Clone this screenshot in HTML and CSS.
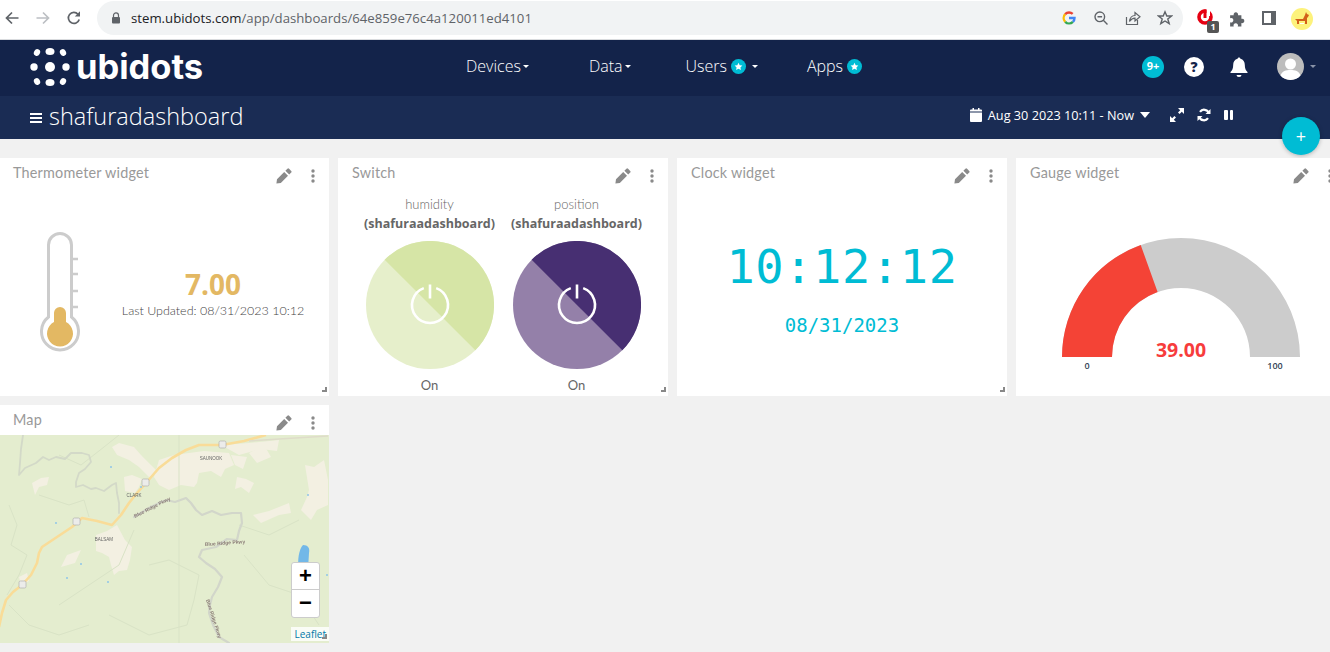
FILE: index.html
```html
<!DOCTYPE html>
<html lang="en">
<head>
    <meta charset="UTF-8">
    <meta name="viewport" content="width=device-width, initial-scale=1.0">
    <title>shafuradashboard | Ubidots</title>
    <link rel="stylesheet" href="styles.css">
</head>
<body>
    <svg class="sprites" width="0" height="0">
        <symbol id="pencil" viewBox="0 0 16 16">
            <path d="M1 11.2 L0.4 15.6 L4.8 15 L12 7.8 L8.2 4 Z M9.4 2.8 L13.2 6.6 L15.2 4.6 a1.2 1.2 0 0 0 0-1.7 L13.1 0.8 a1.2 1.2 0 0 0-1.7 0 Z"/>
        </symbol>
        <symbol id="kebab" viewBox="0 0 4 14">
            <circle cx="2" cy="2" r="1.7"/><circle cx="2" cy="7" r="1.7"/><circle cx="2" cy="12" r="1.7"/>
        </symbol>
        <symbol id="star" viewBox="0 0 10 10">
            <path d="M5 .8 6.3 3.6 9.3 4 7.1 6 7.7 9 5 7.5 2.3 9 2.9 6 .7 4 3.7 3.6Z" fill="#fff"/>
        </symbol>
        <symbol id="power" viewBox="0 0 128 128">
            <path d="M57.8 47.1 A18 18 0 1 0 70.2 47.1" fill="none" stroke="#fff" stroke-width="2.6"/>
            <path d="M64 43.5 V57.5" stroke="#fff" stroke-width="2.6"/>
        </symbol>
    </svg>

    <!-- browser toolbar -->
    <div class="browser-bar">
        <svg class="nav-arrow" viewBox="0 0 16 16"><path d="M14.5 8H2.5M8 2.5 2.5 8 8 13.5" fill="none" stroke="#5f6368" stroke-width="1.7"/></svg>
        <svg class="nav-arrow" viewBox="0 0 16 16"><path d="M1.5 8h12M8 2.5 13.5 8 8 13.5" fill="none" stroke="#bcbfc3" stroke-width="1.7"/></svg>
        <svg class="nav-arrow" viewBox="0 0 16 16"><path d="M13.2 9.4A5.5 5.5 0 1 1 12 4.2" fill="none" stroke="#5f6368" stroke-width="1.7"/><path d="M14 1.2V6.4H8.8Z" fill="#5f6368"/></svg>
        <div class="address">
            <svg class="lock" viewBox="0 0 10 12"><path d="M2.5 5V3.4a2.5 2.5 0 0 1 5 0V5" fill="none" stroke="#5f6368" stroke-width="1.2"/><rect x="1" y="5" width="8" height="6.6" rx="1" fill="#5f6368"/></svg>
            <span class="url"><span class="url-host">stem.ubidots.com</span>/app/dashboards/64e859e76c4a120011ed4101</span>
            <div class="address-icons">
                <svg class="tool-icon" viewBox="0 0 16 16">
                    <path d="M8 2.500a5.500 5.500 0 0 1 3.700 1.400" fill="none" stroke="#ea4335" stroke-width="2.400"/>
                    <path d="M4.200 4.200A5.500 5.500 0 0 0 4.200 11.800" fill="none" stroke="#fbbc05" stroke-width="2.400"/>
                    <path d="M4.200 11.800A5.500 5.500 0 0 0 11.900 11.900" fill="none" stroke="#34a853" stroke-width="2.400"/>
                    <path d="M8 8h5.500a5.500 5.500 0 0 1-1.600 3.900" fill="none" stroke="#4285f4" stroke-width="2.400"/>
                    <path d="M4.200 4.200A5.500 5.500 0 0 1 8 2.500" fill="none" stroke="#ea4335" stroke-width="2.400"/>
                </svg>
                <svg class="tool-icon" viewBox="0 0 16 16"><circle cx="6.800" cy="6.800" r="4.800" fill="none" stroke="#5f6368" stroke-width="1.400"/><path d="M4.500 6.800h4.600M10.300 10.300 14.500 14.500" fill="none" stroke="#5f6368" stroke-width="1.400"/></svg>
                <svg class="tool-icon" viewBox="0 0 16 16"><path d="M1.500 7v7.500h11V10" fill="none" stroke="#5f6368" stroke-width="1.200"/><path d="M4.500 11.500C5 7.500 7.500 5.500 10 5.500V2.500L15 6.800 10 11V8.200C8 8.200 6 9.300 4.500 11.500Z" fill="none" stroke="#5f6368" stroke-width="1.200"/></svg>
                <svg class="tool-icon" viewBox="0 0 16 16"><path d="M8 1.800 9.800 6H14.500L10.800 8.900 12.200 13.700 8 11 3.800 13.700 5.200 8.900 1.500 6H6.200Z" fill="none" stroke="#5f6368" stroke-width="1.400"/></svg>
            </div>
        </div>
        <div class="extensions">
            <div class="ext-opera">
                <svg viewBox="0 0 20 20"><circle cx="8" cy="9" r="6" fill="none" stroke="#e60012" stroke-width="3.600"/><path d="M9.500 0h3.500v8H9.500z" fill="#fff"/><path d="M6.500 1.500h3V10h-3z" fill="#e60012"/></svg>
                <span class="ext-count">1</span>
            </div>
            <svg class="puzzle" viewBox="0 0 16 16"><path d="M1 5.500h3.200a2 2 0 1 1 3.800 0H11v3.200a2 2 0 1 1 0 3.800V15.500H7.800a2 2 0 1 0-3.600 0H1V11.800a2 2 0 1 0 0-3.600Z" fill="#5f6368"/></svg>
            <div class="side-panel"></div>
            <svg class="profile" viewBox="0 0 22 22"><circle cx="11" cy="11" r="11" fill="#fdf27c"/><path d="M5 11h7l2-4 1-3 1 2 2 1-1 2-1 1v6h-2v-3H8v3H6v-3L4 11Z" fill="#d2601a"/><path d="M9 15h4v1H9z" fill="#fff"/></svg>
        </div>
    </div>

    <!-- ubidots header -->
    <header class="topnav">
        <a class="logo">
            <svg class="logo-dots" viewBox="0 0 40 40">
                <ellipse cx="7" cy="5.500" rx="3" ry="3.500" fill="#fff" transform="rotate(30 7 5.500)"/>
                <ellipse cx="20" cy="4.500" rx="4.500" ry="3.600" fill="#fff"/>
                <ellipse cx="33" cy="5.500" rx="3" ry="3.500" fill="#fff" transform="rotate(-30 33 5.500)"/>
                <circle cx="4" cy="20" r="3.700" fill="#fff"/>
                <circle cx="20" cy="20" r="5" fill="#fff"/>
                <circle cx="36" cy="20" r="3.700" fill="#fff"/>
                <ellipse cx="7" cy="34.500" rx="3" ry="3.500" fill="#fff" transform="rotate(-30 7 34.500)"/>
                <ellipse cx="20" cy="35.500" rx="4.500" ry="3.600" fill="#fff"/>
                <ellipse cx="33" cy="34.500" rx="3" ry="3.500" fill="#fff" transform="rotate(30 33 34.500)"/>
            </svg>
            <span class="logo-text">ubidots</span>
        </a>
        <nav class="main-menu">
            <a class="menu-devices">Devices<i class="caret"></i></a>
            <a class="menu-data">Data<i class="caret"></i></a>
            <a class="menu-users">Users <svg class="menu-star"><circle cx="7.500" cy="7.500" r="7.500" fill="#00bcd4"/><use href="#star" x="3" y="3" width="9" height="9"/></svg><i class="caret caret-gap"></i></a>
            <a class="menu-apps">Apps <svg class="menu-star"><circle cx="7.500" cy="7.500" r="7.500" fill="#00bcd4"/><use href="#star" x="3" y="3" width="9" height="9"/></svg></a>
        </nav>
        <div class="user-tools">
            <span class="notify-badge">9+</span>
            <span class="help-btn">?</span>
            <svg class="bell" viewBox="0 0 20 22"><path d="M10 1.500c.8 0 1.400.6 1.400 1.300 2.900.7 4.400 3 4.400 6 0 4 1 5.700 2.700 7.200v1H1.500v-1C3.200 14.500 4.200 12.800 4.200 8.800c0-3 1.500-5.300 4.400-6C8.600 2.100 9.200 1.500 10 1.500Z" fill="#fff"/><path d="M7.500 19h5a2.500 2 0 0 1-5 0Z" fill="#fff"/></svg>
            <svg class="avatar" viewBox="0 0 27 27"><circle cx="13.500" cy="13.500" r="13.500" fill="#bdbdbd"/><circle cx="13.500" cy="11" r="5.500" fill="#fff"/><path d="M3.500 22.500C5 18 9 17 13.500 17s8.500 1 10 5.500A13.500 13.500 0 0 1 3.500 22.500Z" fill="#fff"/></svg>
            <i class="caret caret-user"></i>
        </div>
    </header>

    <div class="subnav">
        <div class="dash-title">
            <span class="hamburger"><i></i><i></i><i></i></span>
            <span class="dash-name">shafuradashboard</span>
        </div>
        <div class="dash-tools">
            <svg class="calendar" viewBox="0 0 12 14"><path d="M0 4.500h12V13a1 1 0 0 1-1 1H1a1 1 0 0 1-1-1ZM1 1.500h1.500V0h1.500v1.500h4V0h1.500v1.500H11a1 1 0 0 1 1 1v1H0v-1a1 1 0 0 1 1-1Z" fill="#fff"/></svg>
            <span class="date-range">Aug 30 2023 10:11 - Now</span>
            <i class="range-caret"></i>
            <svg class="tool-expand" viewBox="0 0 14 14"><path d="M8 0h6v6l-2.200-2.200L9.600 6 8 4.400l2.200-2.200ZM6 14H0V8l2.200 2.200L4.400 8 6 9.600l-2.200 2.200Z" fill="#fff"/></svg>
            <svg class="tool-refresh" viewBox="0 0 14 14"><path d="M11.800 5.200A5 5 0 0 0 3 3.800" fill="none" stroke="#fff" stroke-width="2.200"/><path d="M2.200 8.800A5 5 0 0 0 11 10.200" fill="none" stroke="#fff" stroke-width="2.200"/><path d="M13.500 1v5h-5ZM.5 13V8h5Z" fill="#fff"/></svg>
            <span class="tool-pause"><i></i><i></i></span>
        </div>
    </div>

    <button class="add-widget">+</button>

    <main class="dashboard">
        <section class="widget">
            <div class="widget-head">
                <h3>Thermometer widget</h3>
                <div class="widget-actions"><svg class="icon-pencil"><use href="#pencil"/></svg><svg class="icon-kebab"><use href="#kebab"/></svg></div>
            </div>
            <div class="widget-body thermo">
                <svg class="thermo-svg" viewBox="0 0 120 130">
                    <path d="M48.500 90V18a11.500 11.500 0 0 1 23 0V90a18.500 18.500 0 1 1-23 0Z" fill="#fff" stroke="#ccc" stroke-width="3"/>
                    <path d="M72 32h6M72 47h6M72 64h6M72 80h6" stroke="#ccc" stroke-width="2.500"/>
                    <path d="M54 86a6 6 0 0 1 12 0V95a13 13 0 1 1-12 0Z" fill="#e3b863"/>
                </svg>
                <div class="thermo-info">
                    <div class="thermo-value">7.00</div>
                    <div class="thermo-time">Last Updated: 08/31/2023 10:12</div>
                </div>
            </div>
            <span class="resize-handle"></span>
        </section>

        <section class="widget">
            <div class="widget-head">
                <h3>Switch</h3>
                <div class="widget-actions"><svg class="icon-pencil"><use href="#pencil"/></svg><svg class="icon-kebab"><use href="#kebab"/></svg></div>
            </div>
            <div class="widget-body switches">
                <div class="switch-col">
                    <div class="switch-label">humidity</div>
                    <div class="switch-device">(shafuraadashboard)</div>
                    <svg class="switch-svg" viewBox="0 0 128 128">
                        <circle cx="64" cy="64" r="64" fill="#e6efcb"/>
                        <path d="M18.700 18.700A64 64 0 0 1 109.300 109.300Z" fill="#d6e5a6"/>
                        <use href="#power"/>
                    </svg>
                    <div class="switch-state">On</div>
                </div>
                <div class="switch-col">
                    <div class="switch-label">position</div>
                    <div class="switch-device">(shafuraadashboard)</div>
                    <svg class="switch-svg" viewBox="0 0 128 128">
                        <circle cx="64" cy="64" r="64" fill="#9480a9"/>
                        <path d="M18.700 18.700A64 64 0 0 1 109.300 109.300Z" fill="#472f72"/>
                        <use href="#power"/>
                    </svg>
                    <div class="switch-state">On</div>
                </div>
            </div>
            <span class="resize-handle"></span>
        </section>

        <section class="widget">
            <div class="widget-head">
                <h3>Clock widget</h3>
                <div class="widget-actions"><svg class="icon-pencil"><use href="#pencil"/></svg><svg class="icon-kebab"><use href="#kebab"/></svg></div>
            </div>
            <div class="widget-body clock">
                <div class="clock-time">10:12:12</div>
                <div class="clock-date">08/31/2023</div>
            </div>
            <span class="resize-handle"></span>
        </section>

        <section class="widget">
            <div class="widget-head">
                <h3>Gauge widget</h3>
                <div class="widget-actions"><svg class="icon-pencil"><use href="#pencil"/></svg><svg class="icon-kebab"><use href="#kebab"/></svg></div>
            </div>
            <div class="widget-body">
                <svg class="gauge-svg" viewBox="0 0 330 208">
                    <path d="M46 169A119 119 0 0 1 284 169H234A69 69 0 0 0 96 169Z" fill="#ccc"/>
                    <path d="M46 169A119 119 0 0 1 124.700 57L141.600 104A69 69 0 0 0 96 169Z" fill="#f44336"/>
                    <text class="gauge-value" x="165" y="169" text-anchor="middle">39.00</text>
                    <text class="gauge-tick" x="71" y="181" text-anchor="middle">0</text>
                    <text class="gauge-tick" x="259" y="181" text-anchor="middle">100</text>
                </svg>
            </div>
        </section>

        <section class="widget widget-map">
            <div class="widget-head">
                <h3>Map</h3>
                <div class="widget-actions"><svg class="icon-pencil"><use href="#pencil"/></svg><svg class="icon-kebab"><use href="#kebab"/></svg></div>
            </div>
            <div class="map">
                <svg class="map-svg" viewBox="0 0 330 208">
                    <rect width="330" height="208" fill="#e4edcf"/>
                    <g fill="#f3f0e2">
                        <path d="M113 12 120 8 135 12 142 20 152 30 160 38 150 42 140 32 130 25 118 20Z"/>
                        <path d="M160 25 175 20 190 18 205 16 230 18 235 30 226 34 222 42 212 36 200 38 198 48 195 52 182 50 170 55 160 50 155 42Z"/>
                        <path d="M222 10 250 8 280 5 278 16 262 14 240 20Z"/>
                        <path d="M33 48 42 43 50 42 48 50 40 52 36 60Z"/>
                        <path d="M125 42 133 40 143 44 140 52 136 58 126 56Z"/>
                        <path d="M97 100 108 96 118 90 126 105 133 112 131 125 128 135 120 136 115 140 112 130 110 122 103 118 97 116Z"/>
                        <path d="M254 80 270 76 290 68 292 78 280 80 262 88Z"/>
                        <path d="M306 30 315 32 325 25 329 45 329 70 318 75 312 85 302 75 308 62 310 55Z"/>
                        <path d="M68 120 82 115 76 128 62 132Z"/>
                        <path d="M238 42 247 44 255 48 250 58 242 52 236 54Z"/>
                        <path d="M232 20 248 22 244 34 236 30Z"/>
                        <path d="M20 142 28 138 30 146 22 150Z"/>
                        <path d="M250 18 265 10 272 22 258 28Z"/>
                    </g>
                    <g fill="none" stroke="#d9e3c6" stroke-linejoin="round">
                        <path d="M180 0V208"/>
                        <path d="M60 20 82 30 105 12 120 0"/>
                        <path d="M10 70 18 90 12 110 28 120 20 140 8 160"/>
                        <path d="M40 60 70 70 85 65 90 82"/>
                        <path d="M150 130 170 125 200 140 195 165 188 190 150 200 110 180"/>
                        <path d="M60 170 90 150 120 130 135 95"/>
                        <path d="M10 170 30 190 60 200 90 190"/>
                        <path d="M245 120 270 150 300 160 320 190"/>
                        <path d="M240 90 270 100 300 85"/>
                    </g>
                    <g fill="none" stroke="#d3d9c8" stroke-linejoin="round" stroke-linecap="round">
                        <path d="M24 0 22 14 21 28 20 40 26 33 37 28 44 22 50 25 57 22 66 24 72 18 83 18 90 20 92 27 86 34 80 38 77 47 77 52 84 50 92 54 97 53 105 56 113 50 117 48 118 58 120 68 120 78" stroke-width="1.800"/>
                        <path d="M135 82 150 73 160 68 167 65 176 67 187 63 192 68 197 75 203 80 213 76 222 80 233 78 242 78 243 88 240 96 238 105 228 104 217 112 203 115 200 122 207 128 216 134 223 142 219 152 213 162 211 170 210 178 214 190 220 202 230 208" stroke="#d2d6ca" stroke-width="2.200"/>
                    </g>
                    <path d="M0 192 3 178 7 165 14 157 23 150 32 140 38 128 40 118 43 112 58 102 73 92 83 83 98 86 113 90 122 80 130 68 138 58 147 48 160 33 173 23 187 15 200 10 223 10 245 6 267 0" fill="none" stroke="#f9dc98" stroke-width="2.600" stroke-linejoin="round"/>
                    <path d="M250 6 280 4 329 1" fill="none" stroke="#dedcc9" stroke-width="1.500"/>
                    <g fill="#ececea" stroke="#aaa" stroke-width=".6">
                        <rect x="220" y="6" width="7" height="7" rx="1.500"/>
                        <rect x="143" y="44" width="7" height="7" rx="1.500"/>
                        <rect x="74" y="83" width="7" height="7" rx="1.500"/>
                        <rect x="20" y="146" width="7" height="7" rx="1.500"/>
                    </g>
                    <g fill="#8fc4e8">
                        <circle cx="112" cy="32" r="1"/><circle cx="142" cy="52" r="1"/><circle cx="57" cy="88" r="1"/><circle cx="82" cy="129" r="1"/><circle cx="109" cy="147" r="1"/><circle cx="309" cy="60" r="1"/><circle cx="328" cy="140" r="1"/><circle cx="68" cy="143" r="1"/>
                    </g>
                    <path d="M304 110c5 0 7 3 6 8l-1 16h-9c-2-8 0-20 4-24Z" fill="#72b8e8"/>
                    <g class="map-labels">
                        <text x="212" y="25" text-anchor="middle">SAUNOOK</text>
                        <text x="135" y="62" text-anchor="middle">CLARK</text>
                        <text x="105" y="106" text-anchor="middle">BALSAM</text>
                        <text class="map-road" transform="translate(136 83) rotate(-27)">Blue Ridge Pkwy</text>
                        <text class="map-road" transform="translate(206 111) rotate(-4)">Blue Ridge Pkwy</text>
                        <text class="map-road" transform="translate(207 165) rotate(72)">Blue Ridge Pkwy</text>
                    </g>
                </svg>
                <div class="map-zoom">
                    <a class="zoom-in">+</a>
                    <a class="zoom-out">−</a>
                </div>
                <a class="map-credit">Leaflet</a>
            </div>
            <span class="resize-handle"></span>
        </section>
    </main>
</body>
</html>
```

FILE: styles.css
```css
* {
    box-sizing: border-box;
}
html, body {
    height: 652px;
}
body {
    margin: 0;
    position: relative;
    overflow: hidden;
    background-color: #f1f1f1;
    font-family: "Open Sans", "Noto Sans", sans-serif;
    color: #555;
}
.sprites {
    position: absolute;
}

/* browser toolbar */
.browser-bar {
    height: 40px;
    display: flex;
    align-items: flex-start;
    background-color: #fff;
    border-bottom: 1px solid #d9dbde;
    padding: 1px 0 0 4px;
}
.nav-arrow {
    width: 16px;
    height: 16px;
    margin: 9px 15px 0 0;
}
.address {
    width: 1086px;
    height: 34px;
    padding: 0 10px 0 14px;
    display: flex;
    align-items: center;
    background-color: #f1f3f4;
    border-radius: 17px;
}
.lock {
    width: 10px;
    height: 12px;
    margin-right: 10px;
}
.url {
    font-family: "Open Sans", sans-serif;
    font-size: 13.2px;
    color: #5f6368;
}
.url-host {
    color: #202124;
}
.address-icons {
    margin-left: auto;
    display: flex;
    gap: 16px;
}
.tool-icon {
    width: 16px;
    height: 16px;
}
.extensions {
    margin-left: 14px;
    padding-top: 7px;
    display: flex;
    align-items: flex-start;
    gap: 14px;
}
.ext-opera {
    position: relative;
    width: 20px;
    height: 20px;
}
.ext-opera svg {
    width: 20px;
    height: 20px;
}
.ext-count {
    position: absolute;
    left: 10px;
    top: 13px;
    width: 12px;
    height: 12px;
    background-color: #555;
    border-radius: 2px;
    color: #fff;
    font-size: 9px;
    font-weight: 700;
    line-height: 12px;
    text-align: center;
}
.puzzle {
    width: 18px;
    height: 18px;
    margin-left: -2px;
    margin-top: 1px;
}
.side-panel {
    width: 14px;
    height: 14px;
    margin: 3px 0 0 1px;
    border: 2px solid #5f6368;
    border-right-width: 5px;
}
.profile {
    width: 22px;
    height: 22px;
    margin-left: 1px;
}

/* header */
.topnav {
    height: 56px;
    display: flex;
    align-items: center;
    padding-left: 30px;
    background-color: #13234a;
    color: #fff;
}
.logo {
    display: flex;
    align-items: center;
    width: 172px;
    gap: 6px;
    margin-top: -2px;
}
.logo-dots {
    width: 40px;
    height: 40px;
    flex: none;
}
.logo-text {
    font-family: "Inter", "Open Sans", sans-serif;
    font-size: 34.5px;
    font-weight: 700;
    line-height: 1;
}
.main-menu {
    display: flex;
    margin-left: 264px;
    margin-top: -4px;
    font-size: 16px;
    font-weight: 300;
}
.menu-data {
    margin-left: 60px;
}
.menu-users {
    margin-left: 55px;
}
.menu-apps {
    margin-left: 49px;
}
.main-menu a {
    display: flex;
    align-items: center;
}
.caret {
    display: inline-block;
    width: 0;
    height: 0;
    margin-left: 2px;
    border-top: 3px solid #fff;
    border-left: 3px solid transparent;
    border-right: 3px solid transparent;
}
.caret-gap {
    margin-left: 6px;
}
.menu-star {
    width: 15px;
    height: 15px;
    margin-left: 4px;
}
.user-tools {
    margin-left: auto;
    margin-top: -3px;
    display: flex;
    align-items: center;
    padding-right: 14px;
}
.notify-badge {
    width: 22px;
    height: 22px;
    border-radius: 50%;
    background-color: #00bcd4;
    font-size: 11px;
    font-weight: 700;
    line-height: 20px;
    text-align: center;
}
.help-btn {
    width: 20px;
    height: 20px;
    margin-left: 20px;
    border-radius: 50%;
    background-color: #fff;
    color: #13234a;
    font-size: 14px;
    font-weight: 800;
    line-height: 20px;
    text-align: center;
}
.bell {
    width: 20px;
    height: 22px;
    margin-left: 25px;
}
.avatar {
    width: 27px;
    height: 27px;
    margin-left: 28px;
}
.caret-user {
    margin-left: 6px;
    border-top-color: #8a93a8;
}

/* dashboard title bar */
.subnav {
    height: 43px;
    display: flex;
    align-items: center;
    justify-content: space-between;
    padding: 0 97px 0 30px;
    background-color: #1a2c54;
    color: #fff;
}
.dash-title {
    display: flex;
    align-items: center;
    gap: 7px;
    margin-top: -1px;
}
.hamburger {
    display: flex;
    flex-direction: column;
    gap: 2px;
    width: 12px;
    margin-top: 1px;
}
.hamburger i {
    height: 2px;
    background-color: #fff;
}
.dash-name {
    font-size: 23.5px;
    font-weight: 300;
    line-height: 1;
}
.dash-tools {
    display: flex;
    align-items: center;
    margin-top: -5px;
}
.calendar {
    width: 12px;
    height: 14px;
}
.date-range {
    margin-left: 6px;
    font-size: 12.7px;
}
.range-caret {
    width: 0;
    height: 0;
    margin-left: 6px;
    border-top: 6px solid #fff;
    border-left: 5px solid transparent;
    border-right: 5px solid transparent;
}
.tool-expand {
    width: 14px;
    height: 14px;
    margin-left: 20px;
}
.tool-refresh {
    width: 14px;
    height: 14px;
    margin-left: 13px;
}
.tool-pause {
    display: flex;
    gap: 2px;
    margin-left: 13px;
}
.tool-pause i {
    width: 3.5px;
    height: 10px;
    background-color: #fff;
    border-radius: 1px;
}
.add-widget {
    position: absolute;
    left: 1282px;
    top: 117px;
    width: 38px;
    height: 38px;
    padding: 0;
    border: none;
    border-radius: 50%;
    background-color: #00bcd4;
    box-shadow: 0 1px 4px rgba(0, 0, 0, .25);
    color: #fff;
    font-family: "Open Sans", sans-serif;
    font-size: 18px;
    line-height: 36px;
}

/* widgets */
.dashboard {
    display: grid;
    grid-template-columns: repeat(4, 330px);
    grid-auto-rows: 238px;
    gap: 9px;
    margin: 19px 0 0 -1px;
}
.widget {
    position: relative;
    display: flex;
    flex-direction: column;
    overflow: hidden;
    background-color: #fff;
}
.widget-head {
    height: 30px;
    flex: none;
    display: flex;
    align-items: flex-start;
    justify-content: space-between;
    padding: 6px 14px 0;
}
.widget-head h3 {
    margin: 0;
    font-family: "Lato", "Open Sans", sans-serif;
    font-size: 14.4px;
    font-weight: 400;
    line-height: 17px;
    letter-spacing: .2px;
    color: #999;
}
.widget-actions {
    display: flex;
    align-items: center;
    height: 20px;
    margin-top: 2px;
    fill: #8a8a8a;
}
.icon-pencil {
    width: 16px;
    height: 16px;
}
.icon-kebab {
    width: 4px;
    height: 14px;
    margin-left: 19px;
}
.widget-body {
    flex: 1;
    min-height: 0;
}
.resize-handle {
    position: absolute;
    right: 2px;
    bottom: 4px;
    width: 5px;
    height: 5px;
    border-right: 2px solid #888;
    border-bottom: 2px solid #888;
}

/* thermometer */
.thermo {
    display: flex;
    align-items: center;
    padding-right: 23px;
}
.thermo-svg {
    width: 120px;
    height: 130px;
    flex: none;
    margin-left: 1px;
}
.thermo-info {
    flex: 1;
    margin-top: 3px;
    text-align: center;
}
.thermo-value {
    font-size: 28px;
    font-weight: 700;
    line-height: 34px;
    color: #e3b863;
}
.thermo-time {
    margin-top: 1px;
    font-family: "Lato", sans-serif;
    font-size: 12.5px;
    font-weight: 300;
    line-height: 18px;
    white-space: nowrap;
    color: #444;
}

/* switch */
.switches {
    display: flex;
    justify-content: center;
    padding-top: 7px;
}
.switch-col {
    width: 147px;
    display: flex;
    flex-direction: column;
    align-items: center;
}
.switch-label {
    font-family: "Lato", sans-serif;
    font-size: 13px;
    font-weight: 300;
    line-height: 18px;
    color: #666;
}
.switch-device {
    margin-top: 2px;
    font-size: 12.5px;
    font-weight: 700;
    line-height: 18px;
    color: #666;
}
.switch-svg {
    width: 128px;
    height: 128px;
    margin-top: 8px;
    flex: none;
}
.switch-state {
    margin-top: 8px;
    font-family: "Lato", sans-serif;
    font-size: 13px;
    line-height: 16px;
    color: #666;
}

/* clock */
.clock {
    display: flex;
    flex-direction: column;
    align-items: center;
    padding-top: 47px;
    font-family: "DejaVu Sans Mono", monospace;
    color: #00bcd4;
}
.clock-time {
    font-size: 47px;
    line-height: 64px;
    letter-spacing: .6px;
}
.clock-date {
    margin-top: 14px;
    font-size: 19px;
    line-height: 24px;
}

/* gauge */
.gauge-svg {
    display: block;
    width: 330px;
    height: 208px;
}
.gauge-value {
    font-family: "Open Sans", sans-serif;
    font-size: 19.5px;
    font-weight: 700;
    fill: #f73c3c;
}
.gauge-tick {
    font-family: "Open Sans", sans-serif;
    font-size: 9px;
    font-weight: 600;
    fill: #333f55;
}

/* map */
.map {
    position: relative;
    flex: 1;
    min-height: 0;
}
.map-svg {
    display: block;
    width: 330px;
    height: 208px;
    filter: blur(.5px);
}
.map-labels text {
    font-family: "Liberation Sans", sans-serif;
    font-size: 4.5px;
    fill: #666;
}
.map-labels .map-road {
    font-size: 5px;
    font-weight: 700;
    fill: #8b7d78;
}
.map-zoom {
    position: absolute;
    right: 9px;
    bottom: 25px;
    width: 29px;
    border: 1px solid #ccc;
    border-radius: 3px;
    background-color: #fff;
    color: #000;
    font-family: "Liberation Sans", sans-serif;
    font-size: 22px;
    font-weight: 700;
    text-align: center;
}
.map-zoom a {
    display: block;
    height: 27px;
    line-height: 26px;
}
.zoom-in {
    border-bottom: 1px solid #ccc;
}
.map-credit {
    position: absolute;
    right: 0;
    bottom: 2px;
    padding: 0 3px 0 4px;
    background-color: rgba(255, 255, 255, .8);
    font-family: "Open Sans", sans-serif;
    font-size: 10px;
    line-height: 14px;
    color: #0078a8;
}
```
